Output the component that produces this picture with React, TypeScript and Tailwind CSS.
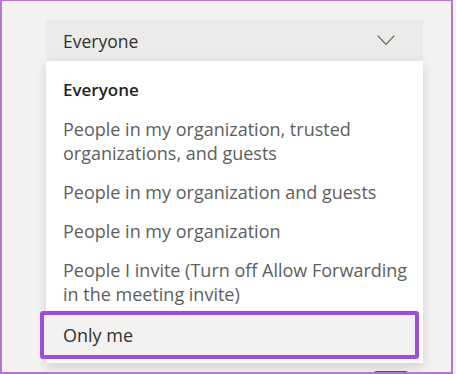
const OPTIONS = [
  'People in my organization, trusted organizations, and guests',
  'People in my organization and guests',
  'People in my organization',
  'People I invite (Turn off Allow Forwarding in the meeting invite)',
];

const FONT = { fontFamily: '"Open Sans", "Noto Sans", sans-serif' };

export default function App() {
  return (
    <div className="h-[374px] w-[456px] overflow-hidden bg-[#fbf4fb]" style={FONT}>
      <div className="relative h-[374px] w-[453px] overflow-hidden border-b-2 border-l-2 border-r-2 border-t border-[#b774d6] bg-[#f3f2f1] pl-[44px] pt-[19px]">
        {/* dropdown trigger */}
        <div className="flex h-[41px] w-[377px] items-center justify-between bg-[#edebe9] pl-[17px] pr-[28px]">
          <span className="text-[17.5px] leading-[24px] text-[#323130]">Everyone</span>
          <svg width="18" height="11" viewBox="0 0 18 11" fill="none" className="text-[#605e5c]">
            <polyline points="0.7,0.7 9,9.5 17.3,0.7" stroke="currentColor" strokeWidth="1.2" />
          </svg>
        </div>

        {/* menu */}
        <div className="relative z-10 w-[377px] bg-white pb-[4px] pt-[9.5px] shadow-[0_4px_10px_rgba(0,0,0,0.14)]">
          <div className="px-[17px] py-[7.5px] text-[17px] font-semibold leading-[24px] text-[#252423]">Everyone</div>
          {OPTIONS.map((o) => (
            <div key={o} className="py-[7.5px] pl-[17px] pr-[10px] text-[18px] leading-[24px] text-[#605e5c]">
              {o}
            </div>
          ))}
          <div className="-ml-[6px] -mt-[3px] w-[379px] rounded-[3px] border-4 border-[#9f4edb] bg-[#f3f2f1] py-[8px] pl-[19px] text-[18px] leading-[24px] text-[#323130]">
            Only me
          </div>
        </div>

        {/* button peeking out below */}
        <div className="absolute left-[371px] top-[370px] h-[10px] w-[36px] rounded-t-[4px] bg-[#6b3fa0]" />
      </div>
    </div>
  );
}
